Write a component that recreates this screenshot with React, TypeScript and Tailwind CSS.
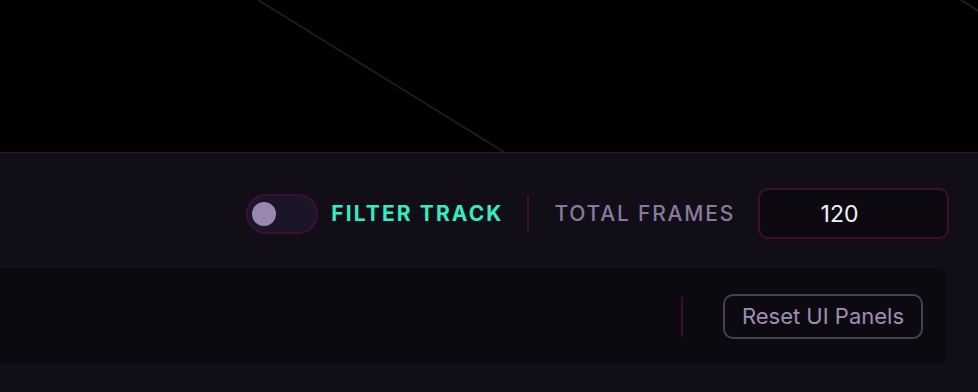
import { useState } from 'react';

export default function App() {
  const [filterOn, setFilterOn] = useState(false);
  const [frames, setFrames] = useState('120');

  return (
    <div
      className="w-[978px] h-[392px] overflow-hidden bg-[#110e18] flex flex-col"
      style={{ fontFamily: 'Inter, "Noto Sans", sans-serif' }}
    >
      {/* Viewport canvas */}
      <div className="h-[152px] bg-black shrink-0">
        <svg width="978" height="152" viewBox="0 0 978 152" className="block">
          <line x1="258" y1="0" x2="504" y2="152" stroke="#1c1c1c" strokeWidth="2" />
          <line x1="958" y1="-2" x2="980" y2="12" stroke="#1c1c1c" strokeWidth="2" />
        </svg>
      </div>

      <div className="flex-1 border-t border-[#3f0f31] flex flex-col">
        {/* Track controls */}
        <div className="flex items-center justify-end pt-[35px] pr-[29px]">
          <button
            onClick={() => setFilterOn(!filterOn)}
            className="w-[72px] h-[40px] rounded-full bg-[#1b1528] border-2 border-[#3f0f31] flex items-center px-[4px]"
          >
            <span
              className={`w-[24px] h-[24px] rounded-full bg-[#9a86ae] ${filterOn ? 'ml-auto' : ''}`}
            />
          </button>
          <span className="ml-[13px] text-[21px] font-bold tracking-[0.1em] text-[#33ecc4]">
            FILTER TRACK
          </span>
          <div className="w-[2px] h-[38px] bg-[#3f0f31] ml-[23px] mr-[26px]" />
          <span className="text-[21px] font-medium tracking-[0.085em] text-[#8c789e]">
            TOTAL FRAMES
          </span>
          <input
            value={frames}
            onChange={(e) => setFrames(e.target.value)}
            className="ml-[23px] w-[191px] h-[51px] rounded-[10px] border-2 border-[#3f0f31] bg-[#0c0a10] pr-[28px] text-center text-[23px] text-[#f4f0f8] outline-none"
          />
        </div>

        {/* Panel */}
        <div className="mt-[28px] -ml-4 mr-[30px] h-[99px] rounded-[10px] bg-[#0c0a10] border border-[#15111c] flex items-center justify-end pr-[24px]">
          <div className="w-[2px] h-[40px] bg-[#3a0e2c] mr-[40px]" />
          <button className="h-[45px] px-[17px] rounded-[10px] border-2 border-[#46424c] text-[22px] text-[#a08cb4]">
            Reset UI Panels
          </button>
        </div>
      </div>
    </div>
  );
}
